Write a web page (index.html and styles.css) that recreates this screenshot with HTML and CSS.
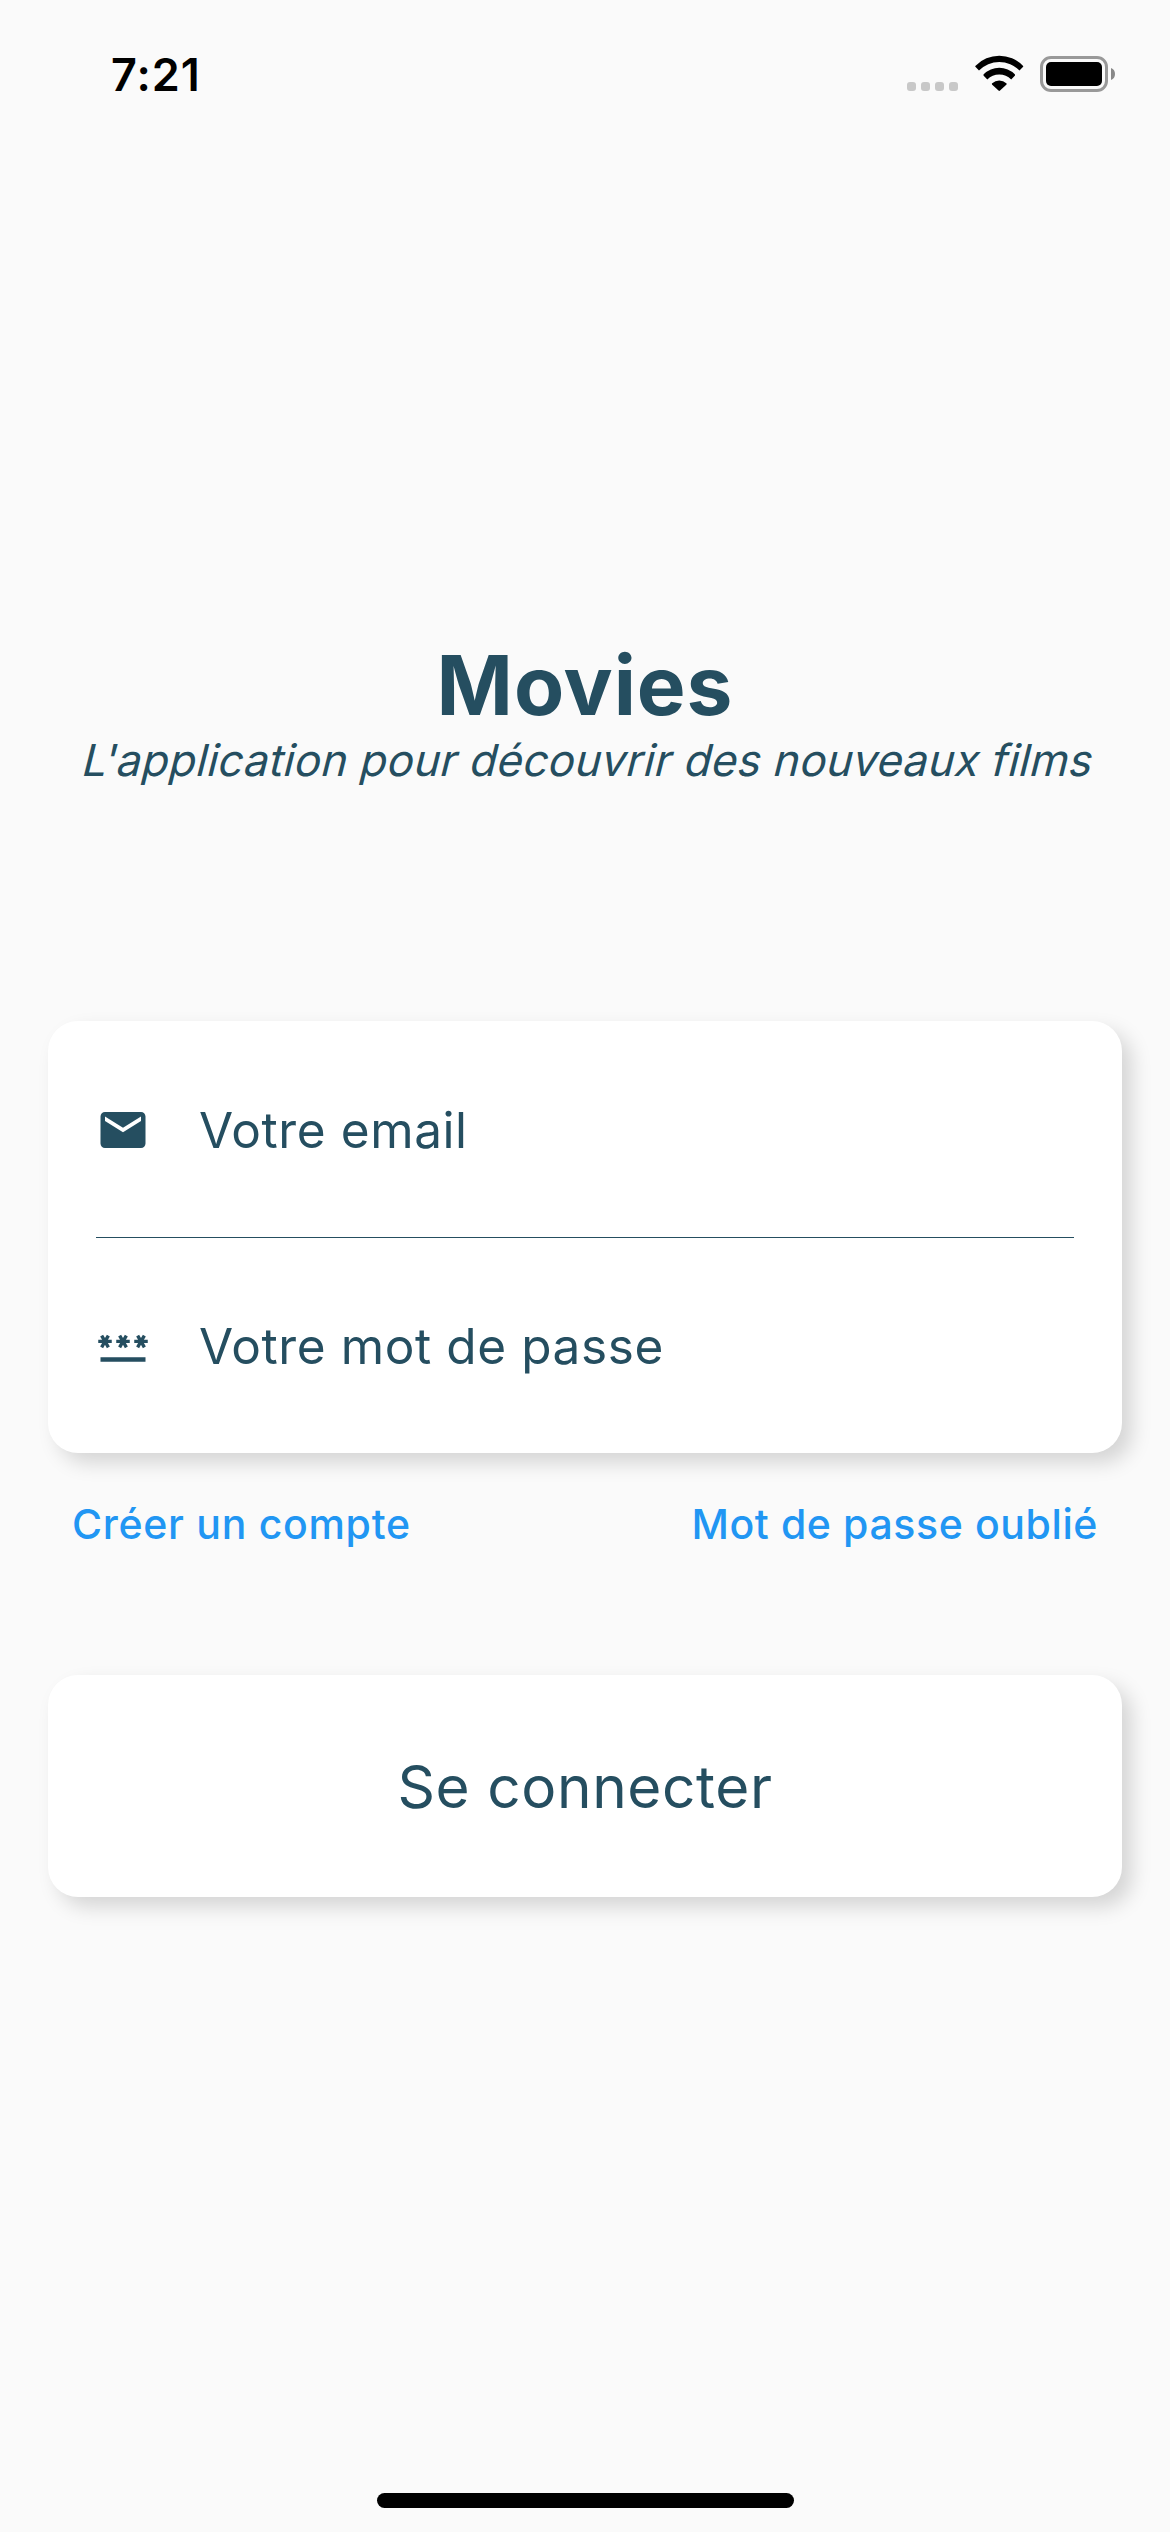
FILE: index.html
```html
<!DOCTYPE html>
<html lang="fr">
<head>
<meta charset="utf-8">
<title>Movies</title>
<link rel="stylesheet" href="styles.css">
</head>
<body>
<div class="screen">
  <header class="status-bar">
    <span class="time">7:21</span>
    <div class="indicators">
      <div class="cellular"><i></i><i></i><i></i><i></i></div>
      <svg class="wifi" width="49" height="36" viewBox="0 0 49 36">
        <path d="M.6 10.700A33 33 0 0 1 47.900 10.700Q48.600 11.400 47.900 12.100L44.500 15.500A28.300 28.300 0 0 0 4 15.500L.6 12.100Q-.1 11.400.6 10.700Z"/>
        <path d="M8.700 19.300A22 22 0 0 1 39.800 19.300Q40.500 20 39.800 20.700L36.200 24.500A17 17 0 0 0 12.300 24.500L8.700 20.700Q8 20 8.700 19.300Z"/>
        <path d="M17.200 28.300A10.500 10.500 0 0 1 31.300 28.300Q32 29 31.300 29.700L25 35.600Q24.250 36.200 23.500 35.600L17.200 29.700Q16.500 29 17.200 28.300Z"/>
      </svg>
      <svg class="battery" width="76" height="36" viewBox="0 0 76 36">
        <rect x="1.500" y="1.500" width="65" height="33" rx="9.500" fill="none" stroke="#999" stroke-width="3"/>
        <rect x="6" y="6" width="56" height="24" rx="5"/>
        <path d="M71 12Q75 13.500 75 18T71 24Z" fill="#888"/>
      </svg>
    </div>
  </header>

  <main class="login">
    <h1 class="title">Movies</h1>
    <p class="tagline">L'application pour découvrir des nouveaux films</p>

    <form class="card">
      <label class="field">
        <svg class="field-icon" viewBox="0 0 24 24"><path d="M20 4H4c-1.100 0-1.990.9-1.990 2L2 18c0 1.100.9 2 2 2h16c1.100 0 2-.9 2-2V6c0-1.100-.9-2-2-2zm0 4l-8 5-8-5V6l8 5 8-5v2z"/></svg>
        <span>Votre email</span>
      </label>
      <label class="field">
        <svg class="field-icon" viewBox="0 0 24 24"><path d="M2 17h20v2H2zM3.150 12.950L4 11.470l.85 1.480 1.300-.75-.85-1.480H7v-1.500H5.300l.85-1.470L4.850 7 4 8.470 3.150 7l-1.300.75.85 1.470H1v1.500h1.700l-.85 1.480zM11.150 12.950L12 11.470l.85 1.480 1.300-.75-.85-1.480H15v-1.500h-1.700l.85-1.470L12.850 7 12 8.470 11.150 7l-1.300.75.85 1.470H9v1.500h1.700l-.85 1.480zM19.150 12.950L20 11.470l.85 1.480 1.300-.75-.85-1.480H23v-1.500h-1.700l.85-1.470L20.850 7 20 8.470 19.150 7l-1.300.75.85 1.470H17v1.500h1.700l-.85 1.480z"/></svg>
        <span>Votre mot de passe</span>
      </label>
    </form>

    <nav class="links">
      <a>Créer un compte</a>
      <a class="forgot">Mot de passe oublié</a>
    </nav>

    <button class="submit">Se connecter</button>
  </main>
  <div class="home-indicator"></div>
</div>
</body>
</html>
```
FILE: styles.css
```css
* {
  box-sizing: border-box;
}

body {
  margin: 0;
  background: #fafafa;
  color: #254e60;
  font-family: Inter, "Liberation Sans", sans-serif;
}

.screen {
  display: flex;
  flex-direction: column;
  width: 1170px;
  height: 2532px;
}

.status-bar {
  display: flex;
  justify-content: space-between;
  height: 141px;
  padding: 45px 54px 0 111px;
  color: #000;
}

.time {
  font-size: 45px;
  font-weight: 600;
  line-height: 60px;
  letter-spacing: 1px;
}

.indicators {
  display: flex;
  align-items: flex-start;
  padding-top: 10px;
}

.cellular {
  display: flex;
  gap: 5px;
  margin: 27px 17px 0 0;
}

.cellular i {
  width: 9px;
  height: 9px;
  border-radius: 3px;
  background: #c8c8c8;
}

.battery {
  margin: 1px 0 0 16px;
}

.login {
  display: flex;
  flex: 1;
  flex-direction: column;
  padding: 496px 48px 0;
}

.title {
  margin: 0;
  font-size: 82px;
  font-weight: 700;
  line-height: 98px;
  letter-spacing: 0.9px;
  text-align: center;
}

/* Slanted roman: keeps the upright letterforms, unlike the true italic */
.tagline {
  margin: 0;
  font-size: 44px;
  line-height: 50px;
  letter-spacing: 0.28px;
  text-align: center;
  white-space: nowrap;
  transform: skewX(-14deg);
  transform-origin: 50% 41px;
}

.card,
.submit {
  border: 0;
  border-radius: 30px;
  background: #fff;
  box-shadow: 10px 10px 20px rgba(0, 0, 0, 0.15);
}

.card {
  height: 432px;
  margin-top: 236px;
  padding: 0 48px;
}

.field {
  display: flex;
  align-items: center;
  gap: 49px;
  height: 217px;
  padding-top: 2px;
  border-bottom: 1px solid #254e60;
  font-size: 49.5px;
  letter-spacing: 0.6px;
}

.field:last-child {
  height: 215px;
  padding-top: 1px;
  border-bottom: 0;
}

.field-icon {
  width: 54px;
  height: 54px;
  fill: currentColor;
}

.links {
  display: flex;
  justify-content: space-between;
  margin-top: 46px;
  padding: 0 24px;
  color: #2196f3;
  font-size: 41px;
  font-weight: 500;
  line-height: 50px;
  letter-spacing: 0.7px;
}

.forgot {
  letter-spacing: 0.6px;
}

.submit {
  height: 222px;
  margin-top: 126px;
  padding: 1px 0 0;
  color: inherit;
  font: 400 58.5px/72px Inter, "Liberation Sans", sans-serif;
  letter-spacing: 0.6px;
}

.home-indicator {
  width: 417px;
  height: 15px;
  margin: 0 auto 24px 377px;
  border-radius: 8px;
  background: #000;
}
```
